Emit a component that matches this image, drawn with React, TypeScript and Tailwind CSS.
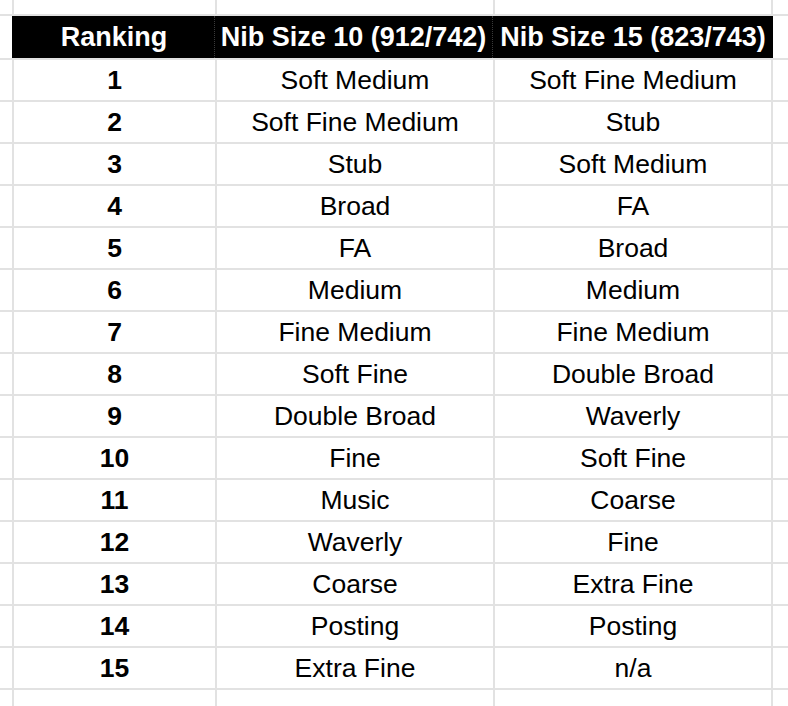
const ROWS: [number, string, string][] = [
  [1, "Soft Medium", "Soft Fine Medium"],
  [2, "Soft Fine Medium", "Stub"],
  [3, "Stub", "Soft Medium"],
  [4, "Broad", "FA"],
  [5, "FA", "Broad"],
  [6, "Medium", "Medium"],
  [7, "Fine Medium", "Fine Medium"],
  [8, "Soft Fine", "Double Broad"],
  [9, "Double Broad", "Waverly"],
  [10, "Fine", "Soft Fine"],
  [11, "Music", "Coarse"],
  [12, "Waverly", "Fine"],
  [13, "Coarse", "Extra Fine"],
  [14, "Posting", "Posting"],
  [15, "Extra Fine", "n/a"],
];

const cell = "bg-white flex items-center justify-center";

export default function App() {
  return (
    <div className="w-[788px] h-[706px] overflow-hidden bg-white text-black font-['Liberation_Sans',Arial,sans-serif] text-[26.5px] leading-none">
      <div className="grid grid-cols-[12px_201px_276px_276px_1fr] grid-rows-[14px_42px_repeat(15,40px)_40px] gap-[2px] bg-[#e2e2e2]">
        {/* top partial row */}
        <div className={cell} />
        <div className={cell} />
        <div className={cell} />
        <div className={cell} />
        <div className={cell} />

        {/* header */}
        <div className={cell} />
        <div className="col-span-3 bg-black text-white font-bold text-[27px] grid grid-cols-[202px_278px_1fr] -ml-[2px] -mr-[2px]">
          <div className="flex items-center justify-center pl-[2px]">Ranking</div>
          <div className="flex items-center justify-center border-l border-dotted border-[#3a3a3a]">Nib Size 10 (912/742)</div>
          <div className="flex items-center justify-center border-l border-dotted border-[#3a3a3a]">Nib Size 15 (823/743)</div>
        </div>
        <div className={cell} />

        {ROWS.map(([n, a, b]) => (
          <div key={n} className="contents">
            <div className={cell} />
            <div className={`${cell} font-bold`}>{n}</div>
            <div className={cell}>{a}</div>
            <div className={cell}>{b}</div>
            <div className={cell} />
          </div>
        ))}

        <div className={cell} />
        <div className={cell} />
        <div className={cell} />
        <div className={cell} />
        <div className={cell} />
      </div>
    </div>
  );
}
